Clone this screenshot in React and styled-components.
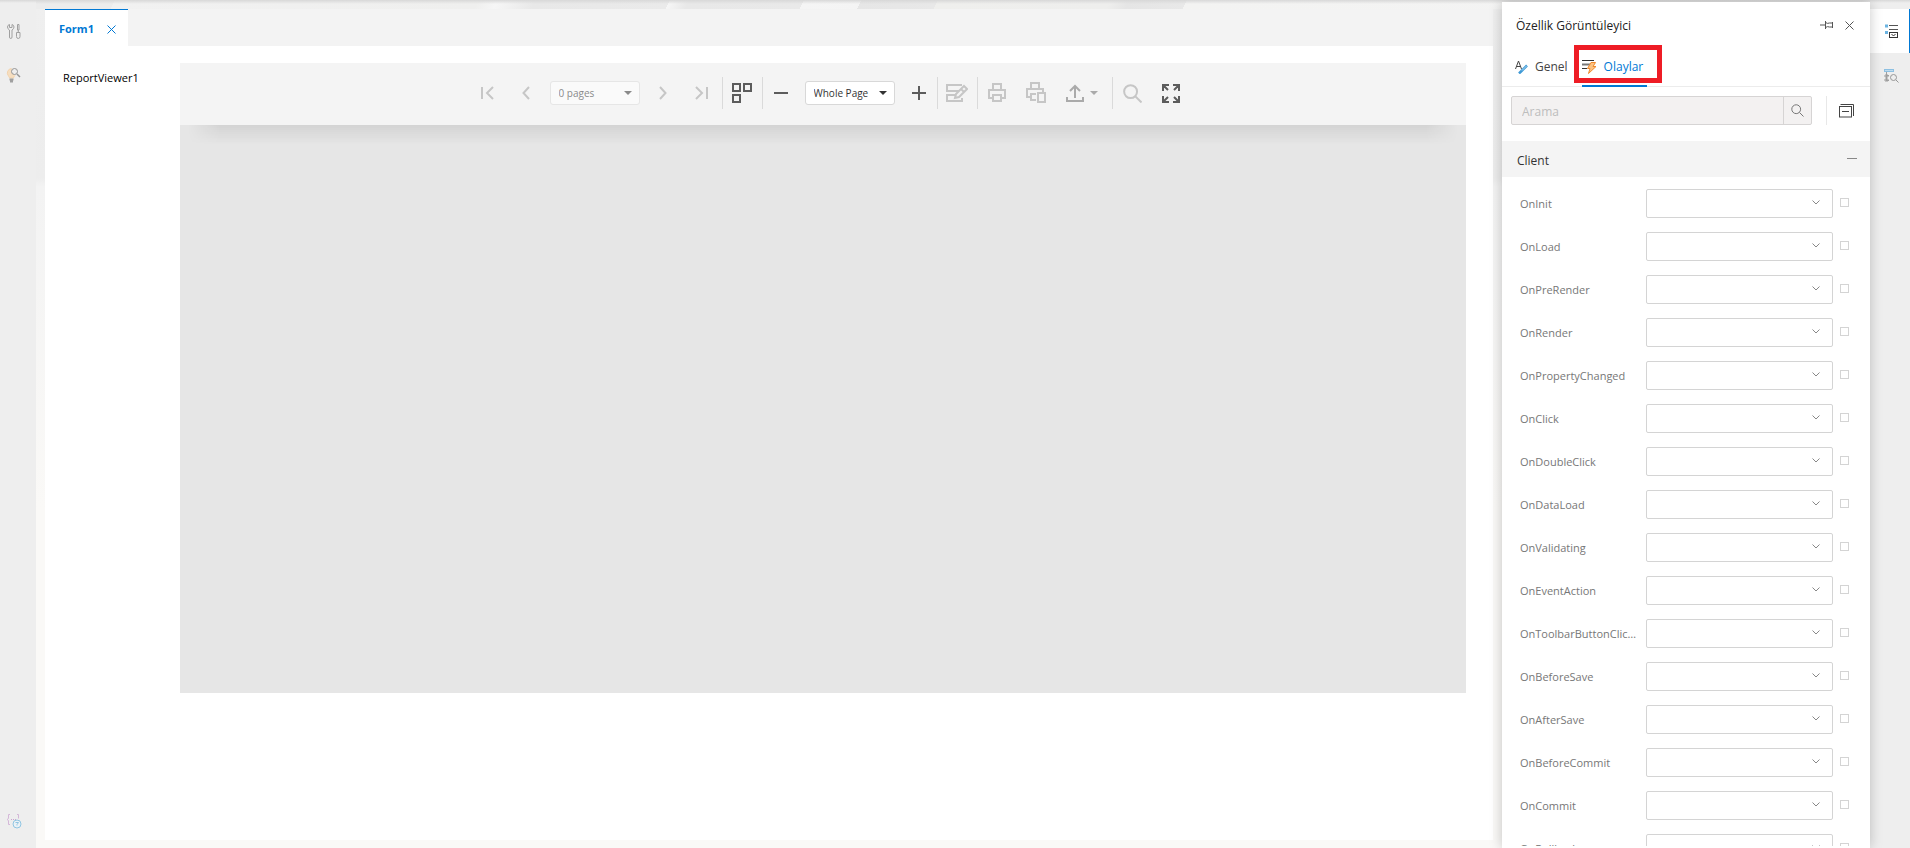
import React, { useState } from "react";
import styled, { createGlobalStyle, css } from "styled-components";

const GlobalStyle = createGlobalStyle`
  * {
    box-sizing: border-box;
  }
  body {
    margin: 0;
    overflow: hidden;
    color: #222;
    font-family: "Open Sans", "Noto Sans", sans-serif;
    font-size: 12px;
    line-height: 16px;
  }
  button, input, select {
    margin: 0;
    font: inherit;
    color: inherit;
  }
`;

const CLIENT_EVENTS = [
  "OnInit",
  "OnLoad",
  "OnPreRender",
  "OnRender",
  "OnPropertyChanged",
  "OnClick",
  "OnDoubleClick",
  "OnDataLoad",
  "OnValidating",
  "OnEventAction",
  "OnToolbarButtonClicked",
  "OnBeforeSave",
  "OnAfterSave",
  "OnBeforeCommit",
  "OnCommit",
  "OnRollback",
];

/* ---------- page ---------- */

const Page = styled.div`
  display: flex;
  height: 100vh;
  background:
    linear-gradient(#d8d8d8, rgba(232, 232, 232, 0)) 0 0 / 100% 4px no-repeat,
    linear-gradient(115deg, #ececec 6%, #f1f1f1 6%, #efefee 25%, #f6f6f6 26%, #e8e8e8 28%, #eaeaea 35%,
      #f6f6f6 35%, #e8e8e8 36%, #e9e9e9 42%, #f5f5f5 42%, #f4f4f4 45%, #e6e6e6 45%, #e8e8e8 49%,
      #efefed 49%, #eeeeed 58%, #e5e5e5 59%, #e8e8e8 62%, #f3f3f2 62%, #f4f4f4 100%) 0 0 / 100% 9px no-repeat,
    linear-gradient(#efefef, #ededed 21%, #f3f3f3 22%, #faf9f7 60%, #faf9f7);
`;

const Rail = styled.nav`
  display: flex;
  flex-direction: column;
  flex: none;
  width: ${(p) => p.$width}px;
  padding-top: 9px;
  background: linear-gradient(#d8d8d8, #eee 3px);
`;

const RailButton = styled.button`
  display: flex;
  align-items: center;
  justify-content: center;
  width: 100%;
  height: 44px;
  padding: 0 ${(p) => (p.$left ? 8 : 0)}px 0 ${(p) => (p.$left ? 0 : 4)}px;
  border: 0;
  border-right: 1px solid ${(p) => (p.$active ? "#0078d4" : "transparent")};
  background: ${(p) => (p.$active ? "#fff" : "transparent")};
  opacity: ${(p) => (p.$active ? 1 : 0.65)};
  cursor: pointer;
`;

const RailSpacer = styled.div`
  flex: 1;
`;

const RailFooter = styled.div`
  padding-bottom: 5px;
`;

/* ---------- designer ---------- */

const Designer = styled.main`
  display: flex;
  flex: 1;
  flex-direction: column;
  min-width: 0;
  margin: 9px 9px 8px;
  background: #fff;
`;

const TabStrip = styled.div`
  display: flex;
  height: 37px;
  background: #f3f3f3;
`;

const FormTab = styled.div`
  display: flex;
  align-items: center;
  gap: 13px;
  width: 83px;
  padding: 2px 0 0 14px;
  border-top: 1px solid #0078d4;
  background: #fff;
  color: #0078d4;
  font-size: 11px;
  font-weight: 700;
`;

const IconButton = styled.button`
  display: flex;
  align-items: center;
  justify-content: center;
  padding: 0;
  border: 0;
  background: none;
  color: inherit;
  cursor: pointer;
`;

const Canvas = styled.section`
  display: flex;
  padding: 17px 27px 0 18px;
`;

const FieldName = styled.div`
  flex: none;
  width: 117px;
  padding-top: 7px;
  color: #000;
  font-size: 11px;
`;

const Viewer = styled.div`
  flex: 1;
  min-width: 0;
  height: 630px;
  background: #e6e6e6;
`;

const Toolbar = styled.div`
  display: flex;
  align-items: center;
  justify-content: center;
  height: 62px;
  padding: 0 0 2px 12px;
  background: #f4f4f4;
`;

const ToolbarShadow = styled.div`
  height: 20px;
  margin: 0 8px;
  background: linear-gradient(rgba(0, 0, 0, 0.08), rgba(0, 0, 0, 0));
  mask-image: linear-gradient(90deg, transparent, #000 32px, #000 calc(100% - 32px), transparent);
`;

const ToolButton = styled.button`
  display: flex;
  align-items: center;
  justify-content: center;
  width: ${(p) => p.$width || 39}px;
  height: 32px;
  padding: 0;
  border: 0;
  background: none;
  color: #5c5c5c;
  &:disabled {
    color: #c6c6c6;
  }
`;

const ExportButton = styled(ToolButton)`
  gap: 6px;
  padding-right: 4px;
  &:disabled {
    color: #aaa;
  }
`;

const ToolDivider = styled.div`
  width: 1px;
  height: 32px;
  background: #dadada;
`;

const ToolSelectBox = styled.div`
  position: relative;
  margin: 0 ${(p) => p.$gap || 4}px;
  color: ${(p) => (p.$muted ? "#8a8a8a" : "#333")};
`;

const ToolSelect = styled.select`
  display: block;
  width: 90px;
  height: 24px;
  padding: 0 8px;
  border: 1px solid ${(p) => (p.disabled ? "#e6e6e6" : "#d8d8d8")};
  border-radius: 3px;
  background: ${(p) => (p.disabled ? "#fafafa" : "#fff")};
  font-size: 10px;
  appearance: none;
  opacity: 1;
`;

const Caret = styled.span`
  border: 4px solid transparent;
  border-top-color: currentColor;
  border-bottom: 0;
  ${(p) =>
    p.$over &&
    css`
      position: absolute;
      top: 10px;
      right: 8px;
      pointer-events: none;
    `}
`;

/* ---------- property panel ---------- */

const Panel = styled.aside`
  display: flex;
  flex: none;
  flex-direction: column;
  width: 368px;
  margin-top: 2px;
  padding-bottom: 2px;
  background: #fff;
  box-shadow: 0 0 12px rgba(0, 0, 0, 0.22);
  z-index: 1;
`;

const PanelHeader = styled.header`
  display: flex;
  align-items: center;
  gap: 11px;
  height: 46px;
  padding: 0 16px 0 14px;
  color: #555;
`;

const PanelTitle = styled.h1`
  flex: 1;
  margin: 0;
  padding-top: 2px;
  color: #222;
  font-size: 12px;
  font-weight: 400;
`;

const TabList = styled.div`
  display: flex;
  gap: 10px;
  height: 39px;
  padding-left: 13px;
  border-bottom: 1px solid #ececec;
`;

const PanelTab = styled.button`
  position: relative;
  display: flex;
  align-items: center;
  gap: 7px;
  height: 39px;
  padding: 0 4px 0 0;
  border: 0;
  border-bottom: 2px solid ${(p) => (p.$active ? "#0078d4" : "transparent")};
  background: none;
  color: ${(p) => (p.$active ? "#0078d4" : "#444")};
  cursor: pointer;
`;

const Highlight = styled.span`
  position: absolute;
  top: -3px;
  left: -8px;
  width: 88px;
  height: 38px;
  border: 5px solid #ee1c25;
  pointer-events: none;
`;

const SearchRow = styled.div`
  display: flex;
  align-items: center;
  padding: 9px 16px 16px 9px;
`;

const SearchBox = styled.div`
  display: flex;
  flex: 1;
  height: 29px;
  border: 1px solid #d6d4d4;
  border-radius: 2px;
  background: #f3f1f1;
`;

const SearchInput = styled.input`
  flex: 1;
  min-width: 0;
  padding: 2px 10px 0;
  border: 0;
  background: none;
  &::placeholder {
    color: #bdbdbd;
    opacity: 1;
  }
`;

const SearchButton = styled(IconButton)`
  width: 28px;
  border-left: 1px solid #d6d4d4;
  color: #777;
`;

const CollapseAll = styled(IconButton)`
  height: 29px;
  margin-left: 14px;
  padding-left: 12px;
  border-left: 1px solid #e8e8e8;
  color: #444;
`;

const GroupHeader = styled.div`
  display: flex;
  align-items: center;
  justify-content: space-between;
  flex: none;
  height: 36px;
  padding: 4px 13px 0 15px;
  background: #f4f4f4;
  color: #333;
`;

const GroupToggle = styled(IconButton)`
  height: 16px;
  padding-bottom: 6px;
  color: #888;
`;

const EventList = styled.div`
  flex: 1;
  min-height: 0;
  padding: 12px 21px 0 18px;
  overflow: hidden;
`;

const EventRow = styled.div`
  display: flex;
  align-items: center;
  height: 29px;
  margin-bottom: 14px;
`;

const EventLabel = styled.label`
  flex: 1;
  min-width: 0;
  padding-right: 6px;
  overflow: hidden;
  color: #777;
  font-size: 11px;
  text-overflow: ellipsis;
  white-space: nowrap;
`;

const EventSelectBox = styled.div`
  position: relative;
  width: 187px;
  color: #888;
  svg {
    position: absolute;
    top: 11px;
    right: 13px;
    pointer-events: none;
  }
`;

const EventSelect = styled.select`
  display: block;
  width: 100%;
  height: 29px;
  border: 1px solid #d4d4d4;
  border-radius: 2px;
  background: #fff;
  appearance: none;
`;

const EventCheck = styled.input`
  width: 9px;
  height: 9px;
  margin: 0 0 2px 7px;
  border: 1px solid #d4d4d4;
  background: #fff;
  appearance: none;
  &:checked {
    background: #0078d4;
  }
`;

/* ---------- icons ---------- */

const Icon = ({ w = 16, h = w, sw = 1, children }) => (
  <svg width={w} height={h} viewBox={`0 0 ${w} ${h}`} fill="none" stroke="currentColor" strokeWidth={sw} aria-hidden="true">
    {children}
  </svg>
);

const ToolsIcon = () => (
  <Icon w={14} h={15}>
    <g stroke="#777">
      <path d="M2.500 .5Q.5 1 .5 3t2 3v7q0 1.500 1.250 1.500T5 13V6q2-1 2-3T5 .5v3H2.500z" />
      <path d="M10.500 .5h1.500v5.500h-1.500zM11.250 6v2.500M9.500 8.500h3.500v4q0 2-1.750 2T9.500 12.500z" />
    </g>
  </Icon>
);

const HintIcon = () => (
  <Icon w={15} h={16}>
    <path d="M5.500 1.500a4.500 4.500 0 0 0-3 7.500q1 1 1 2h4q0-1 1.500-2.500" fill="#fbd7a8" stroke="#f5c48a" />
    <path d="M3.500 12.500h4M4 14.500h3" stroke="#777" strokeWidth="2" />
    <circle cx="8.500" cy="4.500" r="3" fill="#eee" stroke="#666" />
    <path d="M11 7l3 3" stroke="#666" strokeWidth="1.500" />
  </Icon>
);

const BracesIcon = () => (
  <Icon w={16} h={16}>
    <path d="M4 1.500H2.500v4L1 6.500l1.500 1v4H4M11 1.500h1.500v4" stroke="#c79acd" />
    <path d="M5 6.500h1M7 6.500h1M9 6.500h1" stroke="#b880c0" />
    <circle cx="11" cy="11" r="4" fill="#eaf5fb" stroke="#5fb0dc" />
    <path d="M9.500 9.500h3l-1.500 2v1" stroke="#5fb0dc" />
  </Icon>
);

const PropertiesIcon = () => (
  <Icon w={14} h={15}>
    <path d="M0 2h3M0 8.500h3" stroke="#6bb4e2" strokeWidth="3" />
    <path d="M4 1.500h9M4 5.500h9" stroke="#555" />
    <rect x="4.500" y="8.500" width="8" height="5" stroke="#333" />
    <path d="M6.500 10l2 2 2-2" stroke="#333" />
  </Icon>
);

const TreeSearchIcon = () => (
  <Icon w={15} h={15}>
    <rect x=".5" y="1.500" width="9" height="2" fill="#a8d2ee" stroke="#5aa9dc" />
    <path d="M2.500 4v9M2.500 7.500H5M2.500 12.500H5M1 7h3v2H1zM1 11h3v2H1z" stroke="#777" />
    <circle cx="9.500" cy="9.500" r="3" stroke="#666" />
    <path d="M12 12l2.500 2.500" stroke="#666" />
  </Icon>
);

const CloseIcon = ({ size = 9 }) => (
  <Icon w={size}>
    <path d={`M.5 .5L${size - 0.5} ${size - 0.5}M${size - 0.5} .5L.5 ${size - 0.5}`} />
  </Icon>
);

const PinIcon = () => (
  <Icon w={14} h={8}>
    <path d="M0 4h5M5.500 0v8M5.500 1.500q2 1.500 4 .5h3v4h-3q-2-1-4 .5M12.500 1v6" />
  </Icon>
);

const FontBrushIcon = () => (
  <Icon w={13} h={14}>
    <path d="M.5 9L3.500 1l3 8M1.500 6.500h4" stroke="#444" />
    <path d="M12 5.500L6.500 11l-2.500 2.500" stroke="#3f9ad6" strokeWidth="2.500" />
    <path d="M11.500 6L7 10.500" stroke="#a9d6f2" />
  </Icon>
);

const EventsIcon = () => (
  <Icon w={15} h={14}>
    <path d="M0 .5h12" stroke="#333" />
    <path d="M0 4.500h8" stroke="#777" strokeWidth="2" />
    <path d="M0 8.500h5" stroke="#333" />
    <path d="M9 2.500h4.500L11 6.500h3L6.500 13.500l1.500-5H5.500z" fill="#fbc384" stroke="#f08a2c" />
  </Icon>
);

const SearchIcon = ({ size = 13, sw = 1 }) => (
  <Icon w={size} sw={sw}>
    <circle cx={size * 0.4} cy={size * 0.4} r={size * 0.34} />
    <path d={`M${size * 0.65} ${size * 0.65}L${size - 0.5} ${size - 0.5}`} />
  </Icon>
);

const CollapseIcon = () => (
  <Icon w={15} h={14}>
    <path d="M1.500 .5h13V12" />
    <rect x=".5" y="2.500" width="12" height="10.500" />
    <path d="M3 7.500h7" />
  </Icon>
);

const ChevronDown = () => (
  <Icon w={8} h={5}>
    <path d="M.5 .5L4 4l3.500-3.500" />
  </Icon>
);

const FirstIcon = () => (
  <Icon w={14} h={14} sw={2}>
    <path d="M2 1v12M13 1L7 7l6 6" />
  </Icon>
);

const PrevIcon = () => (
  <Icon w={8} h={14} sw={2}>
    <path d="M7 1L1.500 7L7 13" />
  </Icon>
);

const NextIcon = () => (
  <Icon w={8} h={14} sw={2}>
    <path d="M1 1l5.500 6L1 13" />
  </Icon>
);

const LastIcon = () => (
  <Icon w={14} h={14} sw={2}>
    <path d="M12 1v12M1 1l6 6-6 6" />
  </Icon>
);

const MultiPageIcon = () => (
  <Icon w={22} sw={2}>
    <path d="M2 2h7v7H2zM13 2h7v7h-7zM2 13h7v7H2z" />
  </Icon>
);

const MinusIcon = () => (
  <Icon w={14} h={14} sw={2}>
    <path d="M0 7h14" />
  </Icon>
);

const PlusIcon = () => (
  <Icon w={14} h={14} sw={2}>
    <path d="M0 7h14M7 0v14" />
  </Icon>
);

const EditFieldsIcon = () => (
  <Icon w={22} h={20} sw={2}>
    <path d="M16 2H1v6h12M9 12H1v6h15v-3" />
    <path d="M18 3l3 3-8 8-4 1 1-4zM15 6l3 3" />
  </Icon>
);

const PrintIcon = () => (
  <Icon w={18} h={20} sw={2}>
    <path d="M5 7V1h8v6M4 15H1V7h16v8h-3M5 12h8v6H5z" />
  </Icon>
);

const PrintPageIcon = () => (
  <Icon w={20} h={22} sw={2}>
    <path d="M5 7V1h8v6M4 15H1V7h16v3M10 12H5v6h5" />
    <path d="M12 11h7v9h-7z" />
  </Icon>
);

const ExportIcon = () => (
  <Icon w={18} h={18} sw={2}>
    <path d="M9 14V2M4 7l5-5 5 5M1 13v4h16v-4" />
  </Icon>
);

const FullscreenIcon = () => (
  <Icon w={18} h={19} sw={2}>
    <path d="M1 7V1h6M1 1l5 5M11 1h6v6M17 1l-5 5M1 12v6h6M1 18l5-5M11 18h6v-6M17 18l-5-5" />
  </Icon>
);

/* ---------- parts ---------- */

const ViewerToolbar = () => (
  <Toolbar>
    <ToolButton disabled aria-label="First page"><FirstIcon /></ToolButton>
    <ToolButton disabled aria-label="Previous page"><PrevIcon /></ToolButton>
    <ToolSelectBox $muted>
      <ToolSelect disabled aria-label="Page">
        <option>0 pages</option>
      </ToolSelect>
      <Caret $over />
    </ToolSelectBox>
    <ToolButton disabled aria-label="Next page"><NextIcon /></ToolButton>
    <ToolButton disabled aria-label="Last page"><LastIcon /></ToolButton>
    <ToolDivider />
    <ToolButton aria-label="Multipage"><MultiPageIcon /></ToolButton>
    <ToolDivider />
    <ToolButton $width={36} aria-label="Zoom out"><MinusIcon /></ToolButton>
    <ToolSelectBox $gap={6}>
      <ToolSelect aria-label="Zoom">
        <option>Whole Page</option>
      </ToolSelect>
      <Caret $over />
    </ToolSelectBox>
    <ToolButton $width={36} aria-label="Zoom in"><PlusIcon /></ToolButton>
    <ToolDivider />
    <ToolButton disabled aria-label="Edit fields"><EditFieldsIcon /></ToolButton>
    <ToolDivider />
    <ToolButton disabled aria-label="Print"><PrintIcon /></ToolButton>
    <ToolButton disabled aria-label="Print page"><PrintPageIcon /></ToolButton>
    <ExportButton disabled $width={56} aria-label="Export to">
      <ExportIcon />
      <Caret />
    </ExportButton>
    <ToolDivider />
    <ToolButton disabled aria-label="Search"><SearchIcon size={19} sw={2} /></ToolButton>
    <ToolButton aria-label="Full screen"><FullscreenIcon /></ToolButton>
  </Toolbar>
);

const EventProperty = ({ name }) => (
  <EventRow>
    <EventLabel htmlFor={name}>{name}</EventLabel>
    <EventSelectBox>
      <EventSelect id={name} defaultValue="">
        <option value="" />
      </EventSelect>
      <ChevronDown />
    </EventSelectBox>
    <EventCheck type="checkbox" aria-label={name} />
  </EventRow>
);

const PropertyViewer = () => {
  const [tab, setTab] = useState("events");
  const [open, setOpen] = useState(true);
  return (
    <Panel>
      <PanelHeader>
        <PanelTitle>Özellik Görüntüleyici</PanelTitle>
        <IconButton aria-label="Pin"><PinIcon /></IconButton>
        <IconButton aria-label="Close"><CloseIcon /></IconButton>
      </PanelHeader>
      <TabList role="tablist">
        <PanelTab role="tab" $active={tab === "general"} onClick={() => setTab("general")}>
          <FontBrushIcon />
          Genel
        </PanelTab>
        <PanelTab role="tab" $active={tab === "events"} onClick={() => setTab("events")}>
          <EventsIcon />
          Olaylar
          <Highlight />
        </PanelTab>
      </TabList>
      <SearchRow>
        <SearchBox>
          <SearchInput placeholder="Arama" aria-label="Arama" />
          <SearchButton aria-label="Search"><SearchIcon /></SearchButton>
        </SearchBox>
        <CollapseAll aria-label="Collapse all"><CollapseIcon /></CollapseAll>
      </SearchRow>
      <GroupHeader>
        Client
        <GroupToggle aria-label="Toggle Client" onClick={() => setOpen(!open)}>
          <Icon w={10} h={1}><path d="M0 .5h10" /></Icon>
        </GroupToggle>
      </GroupHeader>
      <EventList>
        {open && CLIENT_EVENTS.map((name) => <EventProperty key={name} name={name} />)}
      </EventList>
    </Panel>
  );
};

const App = () => (
  <>
    <GlobalStyle />
    <Page>
      <Rail $width={36}>
        <RailButton $left aria-label="Toolbox"><ToolsIcon /></RailButton>
        <RailButton $left aria-label="Hints"><HintIcon /></RailButton>
        <RailSpacer />
        <RailFooter>
          <RailButton $left aria-label="Expressions"><BracesIcon /></RailButton>
        </RailFooter>
      </Rail>
      <Designer>
        <TabStrip>
          <FormTab>
            Form1
            <IconButton aria-label="Close Form1"><CloseIcon /></IconButton>
          </FormTab>
        </TabStrip>
        <Canvas>
          <FieldName>ReportViewer1</FieldName>
          <Viewer>
            <ViewerToolbar />
            <ToolbarShadow />
          </Viewer>
        </Canvas>
      </Designer>
      <PropertyViewer />
      <Rail $width={40}>
        <RailButton $active aria-label="Properties"><PropertiesIcon /></RailButton>
        <RailButton aria-label="Object tree"><TreeSearchIcon /></RailButton>
      </Rail>
    </Page>
  </>
);

export default App;
